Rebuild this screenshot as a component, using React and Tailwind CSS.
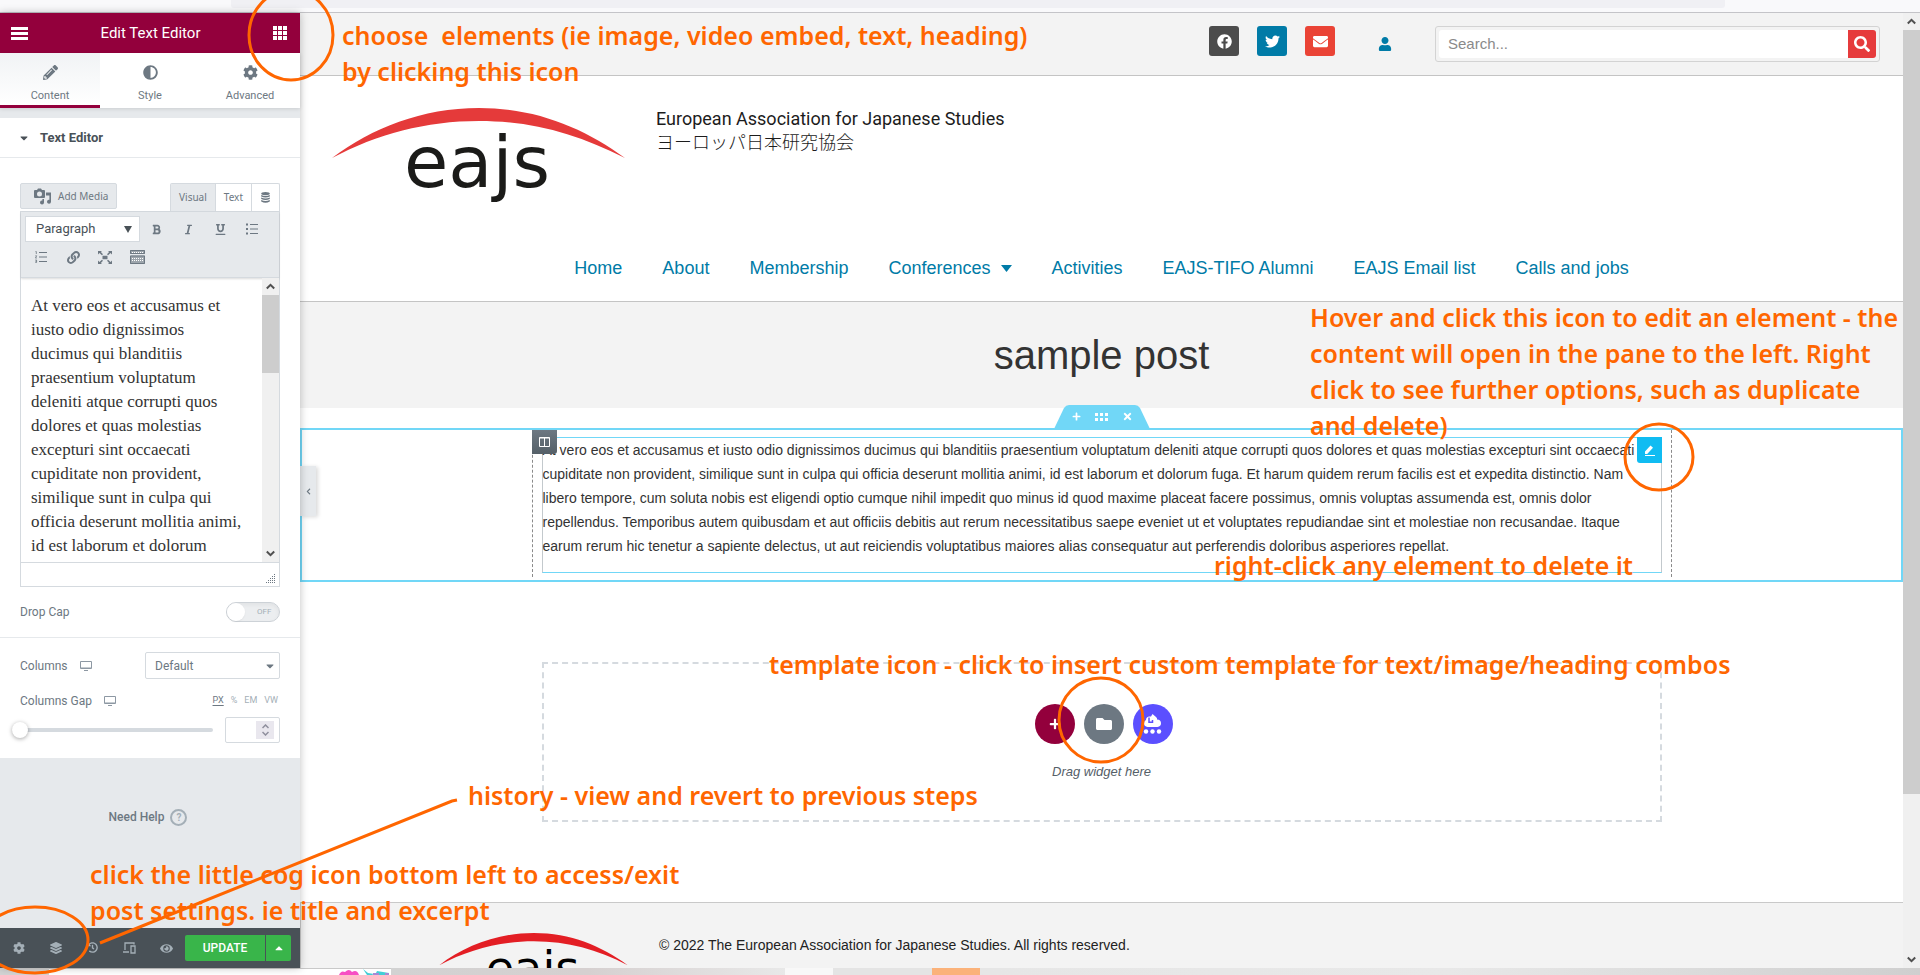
import {
  FaPencilAlt,
  FaAdjust,
  FaCog,
  FaBold,
  FaItalic,
  FaUnderline,
  FaLink,
  FaLayerGroup,
  FaHistory,
  FaEye,
  FaFacebook,
  FaTwitter,
  FaEnvelope,
  FaUser,
  FaSearch,
  FaFolder,
  FaPlus,
  FaTimes,
  FaCaretDown,
  FaCaretUp,
  FaChevronLeft,
} from 'react-icons/fa'

const LOREM =
  'At vero eos et accusamus et iusto odio dignissimos ducimus qui blanditiis praesentium voluptatum deleniti atque corrupti quos dolores et quas molestias excepturi sint occaecati cupiditate non provident, similique sunt in culpa qui officia deserunt mollitia animi, id est laborum et dolorum fuga. Et harum quidem rerum facilis est et expedita distinctio. Nam libero tempore, cum soluta nobis est eligendi optio cumque nihil impedit quo minus id quod maxime placeat facere possimus, omnis voluptas assumenda est, omnis dolor repellendus. Temporibus autem quibusdam et aut officiis debitis aut rerum necessitatibus saepe eveniet ut et voluptates repudiandae sint et molestiae non recusandae. Itaque earum rerum hic tenetur a sapiente delectus, ut aut reiciendis voluptatibus maiores alias consequatur aut perferendis doloribus asperiores repellat.'

const NAV = ['Home', 'About', 'Membership', 'Conferences', 'Activities', 'EAJS-TIFO Alumni', 'EAJS Email list', 'Calls and jobs']

const TABS = [
  { label: 'Content', Icon: FaPencilAlt, active: true },
  { label: 'Style', Icon: FaAdjust },
  { label: 'Advanced', Icon: FaCog },
]

const SOCIAL = [
  { label: 'Facebook', Icon: FaFacebook, color: 'bg-[#4c4c4c]' },
  { label: 'Twitter', Icon: FaTwitter, color: 'bg-[#007ba7]' },
  { label: 'Email', Icon: FaEnvelope, color: 'bg-[#ea4335]' },
]

function DotGrid({ cols, rows, size, gap }) {
  const step = size + gap
  const w = cols * step - gap
  const h = rows * step - gap
  const cells = Array.from({ length: cols * rows }, (_, i) => i)
  return (
    <svg width={w} height={h} viewBox={`0 0 ${w} ${h}`} fill="currentColor">
      {cells.map((i) => (
        <rect key={i} x={(i % cols) * step} y={Math.floor(i / cols) * step} width={size} height={size} />
      ))}
    </svg>
  )
}

function MediaIcon() {
  return (
    <svg width="18" height="17" viewBox="0 0 18 17" fill="currentColor">
      <path fillRule="evenodd" d="M1 2h2l1-1.500h3L8 2h2q1 0 1 1v6q0 1-1 1H1q-1 0-1-1V3q0-1 1-1zM5.500 3.500a2.500 2.500 0 1 0 0 5 2.500 2.500 0 0 0 0-5z" />
      <path d="M12 4.500h5v9.300a2 2 0 1 1-1.600-2V7.500H12z" />
      <path d="M10 11v3.500a2 2 0 1 1-1.600-2V11z" />
    </svg>
  )
}

function StackIcon() {
  return (
    <svg width="9" height="11" viewBox="0 0 9 11" fill="currentColor">
      <ellipse cx="4.500" cy="1.600" rx="4.300" ry="1.600" />
      <path d="M.2 3q4.300 2 8.600 0v1.600q-4.300 2-8.600 0zM.2 5.500q4.300 2 8.600 0v1.600q-4.300 2-8.600 0zM.2 8q4.300 2 8.600 0v1.400Q4.500 12 .2 9.400z" />
    </svg>
  )
}

function ListIcon({ ordered }) {
  return (
    <svg width="12" height="12" viewBox="0 0 12 12" stroke="currentColor" fill="none">
      <path d="M4 1.500h8M4 6h8M4 10.500h8" />
      {ordered ? (
        <path strokeWidth=".8" d="M.5.500h.8v2.500M.3 4.800h1.400L.4 7h1.500M.3 9h1.300v1.200H.6h1v1.300H.3" />
      ) : (
        <path strokeWidth="2" d="M0 1.500h2M0 6h2M0 10.500h2" />
      )}
    </svg>
  )
}

function FullscreenIcon() {
  return (
    <svg width="14" height="13" viewBox="0 0 14 13" fill="currentColor">
      <path d="M0 0h4L2.900 1.100 5 3.200 3.900 4.200 1.500 2 0 3.500zM14 0h-4l1.100 1.100L9 3.200l1.100 1L12.500 2 14 3.500zM0 13h4l-1.100-1.100L5 9.800 3.900 8.800 1.500 11 0 9.500zM14 13h-4l1.100-1.100L9 9.800l1.100-1 2.400 2.200L14 9.500zM4.500 4.800h5v3.400h-5z" />
    </svg>
  )
}

function KeyboardIcon() {
  return (
    <svg width="15" height="14" viewBox="0 0 15 14">
      <path fill="currentColor" opacity=".6" d="M0 0h15v4H0zM0 5.500h15V14H0z" />
      <path stroke="currentColor" fill="none" d="M.5.500h14v3H.5zM.5 6h14v7.500H.5z" />
      <path stroke="#fff" strokeDasharray="1 1" d="M2 2.500h11M2 8.500h11M2 10.500h11" />
    </svg>
  )
}

function MonitorIcon() {
  return (
    <svg width="12" height="10" viewBox="0 0 12 10" fill="none" stroke="#8d98a3" strokeWidth="1">
      <path d="M.5.500h11v7H.5zM4 9.500h4" />
      <path d="M1 7h10" />
    </svg>
  )
}

function DevicesIcon() {
  return (
    <svg width="13" height="12" viewBox="0 0 13 12" fill="none" stroke="currentColor" strokeWidth="1.300">
      <path d="M2 8V1h9v1.500M0 10h6" />
      <path d="M8 4h4v7H8z" />
    </svg>
  )
}

function CloudDotsIcon() {
  return (
    <svg width="19" height="20" viewBox="0 0 19 20" fill="#fff">
      <path d="M6 2.500h2L9.500 0 13 3q1.500 1 1 2.500 4 .3 4 3.800 0 3.200-3.500 3.700h-10Q1 12.500 1 9.300q0-2.300 2-3.300 0-3 3-3.500z" />
      <path d="M6 3.500v4.700h3.500V6" fill="none" stroke="#5b4fff" strokeWidth="1.500" />
      <circle cx="3" cy="17.500" r="2.200" />
      <circle cx="9.500" cy="17.500" r="2.200" />
      <circle cx="16" cy="17.500" r="2.200" />
    </svg>
  )
}

function Logo({ className, arc, ink }) {
  return (
    <svg className={className} viewBox="0 0 293 98" role="img" aria-label="eajs">
      <path fill={arc} d="M0 50C40 20 90 0 147 0s105 20 146 50C245 26 200 13 147 13S45 26 0 50z" />
      <text x="145" y="79" textAnchor="middle" fill={ink} fontSize="72" className="font-['DejaVu_Sans',sans-serif]">
        eajs
      </text>
    </svg>
  )
}

function ScrollArrow({ up }) {
  return (
    <svg width="9" height="7" viewBox="0 0 9 7" fill="none" stroke="#505050" strokeWidth="2">
      <path d={up ? 'M.8 5.500 4.500 1.800 8.200 5.500' : 'M.8 1.500 4.500 5.200 8.200 1.500'} />
    </svg>
  )
}

function ToolButton({ label, children }) {
  return (
    <button aria-label={label} className="flex h-7 w-8 items-center justify-center">
      {children}
    </button>
  )
}

function Panel() {
  return (
    <aside className="relative z-10 flex w-[300px] shrink-0 flex-col bg-[#e6e9ec] font-[Roboto,sans-serif] text-[#6d7882] shadow-[0_0_8px_rgba(0,0,0,0.25)]">
      <header className="flex h-10 shrink-0 items-center justify-between bg-[#93003c] pr-[13px] pl-[11px] text-white">
        <button aria-label="Menu">
          <svg width="17" height="13" viewBox="0 0 17 13" fill="currentColor">
            <path d="M0 0h17v3H0zM0 5h17v3H0zM0 10h17v3H0z" />
          </svg>
        </button>
        <h1 className="text-[15px]">Edit Text Editor</h1>
        <button aria-label="Widgets">
          <DotGrid cols={3} rows={3} size={4} gap={1} />
        </button>
      </header>

      <div className="flex h-[55px] shrink-0 bg-white shadow-[0_1px_4px_rgba(0,0,0,0.12)]">
        {TABS.map(({ label, Icon, active }) => (
          <button
            key={label}
            className={
              active
                ? 'flex flex-1 flex-col items-center gap-2 border-b-3 border-[#93003c] bg-linear-to-b from-[#f1f3f5] to-white pt-3'
                : 'flex flex-1 flex-col items-center gap-2 border-b-3 border-transparent pt-3'
            }
          >
            <Icon size={15} />
            <span className="text-[11px] leading-4">{label}</span>
          </button>
        ))}
      </div>

      <section className="mt-[10px] bg-white">
        <button className="flex h-10 w-full items-center gap-2 border-b border-[#e6e9ec] px-[18px] text-[13px] font-bold text-[#495157]">
          <FaCaretDown size={12} className="mr-[2px]" />
          Text Editor
        </button>

        <div className="px-5 pt-[25px]">
          <div className="flex justify-between">
            <button className="flex h-[26px] items-center gap-[6px] rounded-xs border border-[#d5dadf] bg-[#e6e9ec] pr-2 pl-[13px] font-['Noto_Sans',sans-serif] text-[10px]">
              <MediaIcon />
              Add Media
            </button>
            <div className="flex h-7 rounded-t-xs border border-b-0 border-[#d5dadf] text-[10px]">
              <button className="border-r border-[#d5dadf] bg-[#e6e9ec] px-2 font-['Noto_Sans',sans-serif]">Visual</button>
              <button className="border-r border-[#d5dadf] px-2 font-['Noto_Sans',sans-serif]">Text</button>
              <button aria-label="Dynamic tags" className="px-[9px]">
                <StackIcon />
              </button>
            </div>
          </div>

          <div className="border border-[#d5dadf]">
            <div className="flex h-[66px] flex-wrap content-start items-center border-b border-[#d5dadf] bg-[#e6e9ec] pt-[3px] pl-1 shadow-[0_1px_2px_rgba(0,0,0,0.15)]">
              <label className="relative flex items-center">
                <select aria-label="Format" className="h-[26px] w-[115px] appearance-none border border-[#d5dadf] bg-white pl-[10px] text-[13px] text-[#495157]">
                  <option>Paragraph</option>
                </select>
                <svg className="pointer-events-none absolute right-2" width="8" height="7" viewBox="0 0 8 7" fill="#495157">
                  <path d="M0 0h8L4 7z" />
                </svg>
              </label>
              <ToolButton label="Bold"><FaBold size={11} /></ToolButton>
              <ToolButton label="Italic"><FaItalic size={11} /></ToolButton>
              <ToolButton label="Underline"><FaUnderline size={11} /></ToolButton>
              <ToolButton label="Bulleted list"><ListIcon /></ToolButton>
              <ToolButton label="Numbered list"><ListIcon ordered /></ToolButton>
              <ToolButton label="Link"><FaLink size={13} /></ToolButton>
              <ToolButton label="Fullscreen"><FullscreenIcon /></ToolButton>
              <ToolButton label="Toolbar toggle"><KeyboardIcon /></ToolButton>
            </div>
            <div className="flex h-[284px]">
              <textarea
                aria-label="Content"
                defaultValue={LOREM}
                className="min-w-0 flex-1 resize-none overflow-hidden pt-4 pr-[19px] pl-[10px] font-['Liberation_Serif',serif] text-[17px] leading-6 text-[#333]"
              />
              <div className="flex w-[17px] flex-col items-center justify-between bg-[#f0f0f0]">
                <div className="flex h-[17px] items-center"><ScrollArrow up /></div>
                <div className="h-[78px] w-full bg-[#cdcdcd]" />
                <div className="flex-1" />
                <div className="flex h-[17px] items-center"><ScrollArrow /></div>
              </div>
            </div>
            <div className="flex h-6 items-end justify-end border-t border-[#d5dadf] p-[3px]">
              <svg width="10" height="10" viewBox="0 0 10 10" stroke="#6d7882" strokeDasharray="1 1">
                <path d="M0 9.500h10M2 7.500h8M4 5.500h6M6 3.500h4M8 1.500h2" />
              </svg>
            </div>
          </div>

          <label className="flex h-[50px] items-center justify-between text-[12px]">
            Drop Cap
            <span className="relative flex h-5 w-[54px] items-center rounded-full border border-[#cdd2d7] bg-[#eceef0] shadow-inner">
              <input type="checkbox" className="absolute inset-0 appearance-none" />
              <span className="h-[18px] w-[18px] rounded-full bg-white shadow-xs" />
              <span className="ml-3 text-[8px] text-[#a4afb7]">OFF</span>
            </span>
          </label>
        </div>

        <div className="border-t border-[#e6e9ec] px-5 pt-[14px] pb-[15px] text-[12px]">
          <div className="flex items-center">
            <label htmlFor="columns" className="mr-3">Columns</label>
            <MonitorIcon />
            <span className="relative ml-auto flex items-center">
              <select id="columns" className="h-[27px] w-[135px] appearance-none rounded-xs border border-[#d5dadf] bg-white pl-[9px] text-[12px]">
                <option>Default</option>
              </select>
              <FaCaretDown size={12} className="pointer-events-none absolute right-1" />
            </span>
          </div>
          <div className="mt-3 flex h-5 items-center">
            <label htmlFor="gap" className="mr-3">Columns Gap</label>
            <MonitorIcon />
            <div className="ml-auto flex gap-[7px] pr-[2px] text-[9px] text-[#a4afb7]">
              <button className="text-[#6d7882] underline underline-offset-2">PX</button>
              <button>%</button>
              <button>EM</button>
              <button>VW</button>
            </div>
          </div>
          <div className="mt-[6px] flex items-center">
            <input
              id="gap"
              type="range"
              defaultValue="0"
              className="-ml-2 h-1 min-w-0 flex-1 appearance-none rounded-full bg-[#d5dadf] [&::-webkit-slider-thumb]:h-4 [&::-webkit-slider-thumb]:w-4 [&::-webkit-slider-thumb]:appearance-none [&::-webkit-slider-thumb]:rounded-full [&::-webkit-slider-thumb]:bg-white [&::-webkit-slider-thumb]:shadow-[0_1px_4px_rgba(0,0,0,0.35)]"
            />
            <span className="relative ml-3 flex items-center">
              <input aria-label="Gap value" type="number" className="h-[26px] w-[55px] [appearance:textfield] rounded-xs border border-[#d5dadf] pl-2" />
              <span className="absolute right-[6px] flex h-[18px] w-[18px] flex-col items-center justify-center gap-1 bg-[#e9e7ee] text-[#8f8f9d]">
                <svg width="7" height="12" viewBox="0 0 7 12" fill="none" stroke="currentColor" strokeWidth="1.500">
                  <path d="M.5 4 3.500 1l3 3M.5 8l3 3 3-3" />
                </svg>
              </span>
            </span>
          </div>
        </div>
      </section>

      <a href="#help" className="mt-[50px] flex items-center justify-center gap-[6px] pr-1 text-[12px] font-medium">
        Need Help
        <span className="flex h-[17px] w-[17px] items-center justify-center rounded-full border-2 border-[#a4afb7] text-[10px] font-bold text-[#a4afb7]">?</span>
      </a>

      <footer className="mt-auto flex h-10 shrink-0 items-center bg-[#495157] pr-[9px] text-[#a4afb7]">
        <div className="flex flex-1">
          <button aria-label="Settings" className="flex flex-1 justify-center"><FaCog size={12} /></button>
          <button aria-label="Navigator" className="flex flex-1 justify-center"><FaLayerGroup size={12} /></button>
          <button aria-label="History" className="flex flex-1 justify-center"><FaHistory size={11} /></button>
          <button aria-label="Responsive mode" className="flex flex-1 justify-center"><DevicesIcon /></button>
          <button aria-label="Preview" className="flex flex-1 justify-center"><FaEye size={13} /></button>
        </div>
        <button className="h-[26px] w-20 rounded-l-xs bg-[#39b54a] text-[12px] font-medium text-white">UPDATE</button>
        <button aria-label="Save options" className="ml-px flex h-[26px] w-[25px] items-center justify-center rounded-r-xs bg-[#39b54a] text-white">
          <FaCaretUp size={12} />
        </button>
      </footer>
    </aside>
  )
}

function SiteHeader() {
  return (
    <>
      <div className="flex h-[63px] shrink-0 items-start justify-end border-b border-[#c4c4c4] bg-[#f3f3f3] pt-[13px] pr-[23px]">
        <div className="flex gap-[18px]">
          {SOCIAL.map(({ label, Icon, color }) => (
            <a key={label} href="#social" aria-label={label} className={`flex h-[30px] w-[30px] items-center justify-center rounded-[3px] text-white ${color}`}>
              <Icon size={15} />
            </a>
          ))}
        </div>
        <a href="#account" aria-label="Account" className="mt-[11px] mr-[43px] ml-[43px] text-[#007ba7]">
          <FaUser size={14} />
        </a>
        <form className="flex h-9 w-[445px] rounded-[3px] border border-[#d3d3d3] p-[3px]">
          <input aria-label="Search" placeholder="Search..." className="min-w-0 flex-1 rounded-l-[3px] bg-white px-[9px] text-[15px] placeholder:text-[#8a8a8a]" />
          <button aria-label="Submit search" className="flex w-7 items-center justify-center rounded-r-[3px] bg-[#e63b3c] text-white">
            <FaSearch size={16} />
          </button>
        </form>
      </div>

      <div className="flex shrink-0 pt-8 pl-8">
        <Logo className="h-[98px] w-[293px]" arc="#e53a3a" ink="#1b1b19" />
        <div className="ml-[31px] text-[18px] text-[#1c1c1c]">
          <p className="font-[Roboto,sans-serif] leading-[21px]">European Association for Japanese Studies</p>
          <p lang="ja" className="font-['Noto_Sans_CJK_JP',sans-serif] leading-6 font-light">ヨーロッパ日本研究協会</p>
        </div>
      </div>

      <nav className="flex h-24 shrink-0 items-center justify-center gap-10 border-b border-[#c4c4c4] pt-[30px] text-[18px] text-[#007ba7]">
        {NAV.map((item) => (
          <a key={item} href="#nav" className="flex items-center gap-[10px]">
            {item}
            {item === 'Conferences' && (
              <svg width="11" height="7" viewBox="0 0 11 7" fill="currentColor">
                <path d="M0 0h11L5.500 7z" />
              </svg>
            )}
          </a>
        ))}
      </nav>
    </>
  )
}

function EditedSection() {
  return (
    <section className="relative mt-5 flex h-[154px] shrink-0 justify-center border-2 border-[#71d7f7]">
      <div className="absolute -top-[25px] flex h-[23px] w-[96px] items-center justify-center pl-[2px]">
        <svg className="absolute inset-0" width="96" height="24" viewBox="0 0 96 24" fill="#71d7f7">
          <path d="M0 24 10 3q2-3 5-3h66q3 0 5 3l10 21z" />
        </svg>
        <div className="relative flex items-center gap-[14px] text-white">
          <button aria-label="Add section"><FaPlus size={9} /></button>
          <button aria-label="Edit section"><DotGrid cols={3} rows={2} size={3} gap={2} /></button>
          <button aria-label="Delete section"><FaTimes size={11} /></button>
        </div>
      </div>

      <button aria-label="Hide panel" className="absolute top-9 -left-[2px] flex h-[50px] w-4 items-center justify-center bg-[#e6e9ec] text-[#6d7882] shadow-[2px_1px_4px_rgba(0,0,0,0.15)]">
        <FaChevronLeft size={7} />
      </button>

      <div className="relative mb-[3px] w-full max-w-[1140px] border-x border-dashed border-[#8a8a8a] px-[9px] pt-[7px]">
        <div className="relative h-[136px] border border-x-[#c3c9cd] border-y-[#71d7f7]">
          <p className="text-[14px] leading-6 text-[#333]">{LOREM}</p>
          <button aria-label="Edit text editor" className="absolute -top-px -right-px flex h-[26px] w-[25px] items-center justify-center rounded-bl-[3px] bg-[#10bcf2]">
            <svg width="11" height="11" viewBox="0 0 11 11" fill="#fff">
              <path d="M1 9V6.500L6.500.500 9 2.800 3.200 9zM1 10h10v1H1z" />
            </svg>
          </button>
        </div>
        <button aria-label="Edit column" className="absolute top-0 -left-px flex h-6 w-[25px] items-center justify-center rounded-br-[3px] bg-linear-to-b from-[#6d7882] to-[#556068]">
          <svg width="11" height="10" viewBox="0 0 11 10" fill="none" stroke="#fff">
            <path d="M.5 1h10M.5.500h10v9H.5zM5.500 1v9" />
          </svg>
        </button>
      </div>
    </section>
  )
}

function DropArea() {
  return (
    <section className="mx-auto mt-20 flex h-[160px] w-full max-w-[1120px] shrink-0 flex-col items-center border-2 border-dashed border-[#d5dadf] pt-[40px]">
      <div className="flex gap-[9px] pl-1 text-white">
        <button aria-label="Add new section" className="flex h-10 w-10 items-center justify-center rounded-full bg-[#93003c]">
          <FaPlus size={12} />
        </button>
        <button aria-label="Add template" className="flex h-10 w-10 items-center justify-center rounded-full bg-[#6d7882]">
          <FaFolder size={16} />
        </button>
        <button aria-label="Cloud templates" className="flex h-10 w-10 items-center justify-center rounded-full bg-[#5b4fff]">
          <CloudDotsIcon />
        </button>
      </div>
      <p className="mt-[18px] text-[13px] leading-5 text-[#556068] italic">Drag widget here</p>
    </section>
  )
}

function Note({ className, children }) {
  return (
    <p className={`absolute font-['Noto_Sans','Open_Sans',sans-serif] text-[25px] leading-9 font-semibold whitespace-pre text-[#ff6600] ${className}`}>
      {children}
    </p>
  )
}

function Annotations() {
  return (
    <div className="pointer-events-none absolute inset-0 z-20 overflow-hidden">
      <svg className="absolute inset-0 h-full w-full" fill="none" stroke="#ff6600" strokeWidth="3">
        <ellipse cx="291" cy="35" rx="42" ry="45" />
        <ellipse cx="1659" cy="457" rx="34" ry="33" />
        <circle cx="1101" cy="720" r="42" />
        <ellipse cx="35" cy="940" rx="53" ry="33" />
        <path d="M100 943 452 801l5-1" />
      </svg>
      <Note className="top-[17px] left-[342px]">{'choose  elements (ie image, video embed, text, heading)\nby clicking this icon'}</Note>
      <Note className="top-[299px] left-[1310px]">
        {'Hover and click this icon to edit an element - the\ncontent will open in the pane to the left. Right\nclick to see further options, such as duplicate\nand delete)'}
      </Note>
      <Note className="top-[547px] left-[1214px]">right-click any element to delete it</Note>
      <Note className="top-[646px] left-[769px]">template icon - click to insert custom template for text/image/heading combos</Note>
      <Note className="top-[777px] left-[468px]">history - view and revert to previous steps</Note>
      <Note className="top-[856px] left-[90px]">{'click the little cog icon bottom left to access/exit\npost settings. ie title and excerpt'}</Note>
    </div>
  )
}

export default function App() {
  return (
    <div className="relative flex h-screen flex-col overflow-hidden bg-white font-['Liberation_Sans',sans-serif]">
      <div className="flex h-[13px] shrink-0 border-b border-[#c4c4c8] bg-[#f9f9fb] pr-[195px] pl-[231px]">
        <div className="h-2 flex-1 rounded-b-[3px] bg-[#f0f0f4]" />
      </div>

      <div className="flex min-h-0 flex-1">
        <Panel />
        <main className="flex min-w-0 flex-1 flex-col overflow-hidden">
          <SiteHeader />
          <div className="flex h-[106px] shrink-0 items-center justify-center bg-[#f3f3f3]">
            <h2 className="text-[40px] leading-none text-[#333]">sample post</h2>
          </div>
          <EditedSection />
          <DropArea />
          <footer className="mt-20 flex shrink-0 border-t border-l border-[#c9c9c9] bg-[#f3f3f3] pt-[30px] pl-[138px]">
            <Logo className="h-[63px] w-[189px]" arc="#e31e24" ink="#000" />
            <p className="ml-[31px] text-[14px] leading-6 text-[#222]">
              © 2022 The European Association for Japanese Studies. All rights reserved.
            </p>
          </footer>
        </main>
        <div className="flex w-[17px] shrink-0 flex-col items-center bg-[#f0f0f0]">
          <div className="flex h-[17px] items-center"><ScrollArrow up /></div>
          <div className="w-full flex-[764] bg-[#cdcdcd]" />
          <div className="flex-[157]" />
          <div className="flex h-[17px] items-center"><ScrollArrow /></div>
        </div>
      </div>

      {/* top edge of the desktop and its taskbar */}
      <div className="flex h-[7px] shrink-0 bg-[#e4e4e4]">
        <div className="w-[49px] bg-[#d4d4d4]" />
        <div className="flex w-[342px] justify-end border-t border-[#c9c9c9] bg-white">
          <svg width="54" height="6" viewBox="0 0 54 6">
            <path d="M2 6q2-5 6-3 4-4 7 0 5-3 7 3z" fill="#f74fc4" />
            <path d="m26 0 5 4 6 1-2 1h-5zM40 2l12 2v2H38z" fill="#43cfd6" />
            <path d="M36 4h6v2h-6zM48 4h4v2h-4z" fill="#a58ad6" />
          </svg>
        </div>
        <div className="w-[394px] bg-linear-to-r from-[#d2d2d2] via-[#d6d0d0] to-[#e8e8e8]" />
        <div className="w-12 bg-[#f8f8f8]" />
        <div className="w-[99px]" />
        <div className="w-12 bg-[#fbb27a]" />
        <div className="flex-1 bg-linear-to-r from-[#e6e6e6] via-[#e8e8e8] to-[#cfcfcf]" />
      </div>

      <Annotations />
    </div>
  )
}
